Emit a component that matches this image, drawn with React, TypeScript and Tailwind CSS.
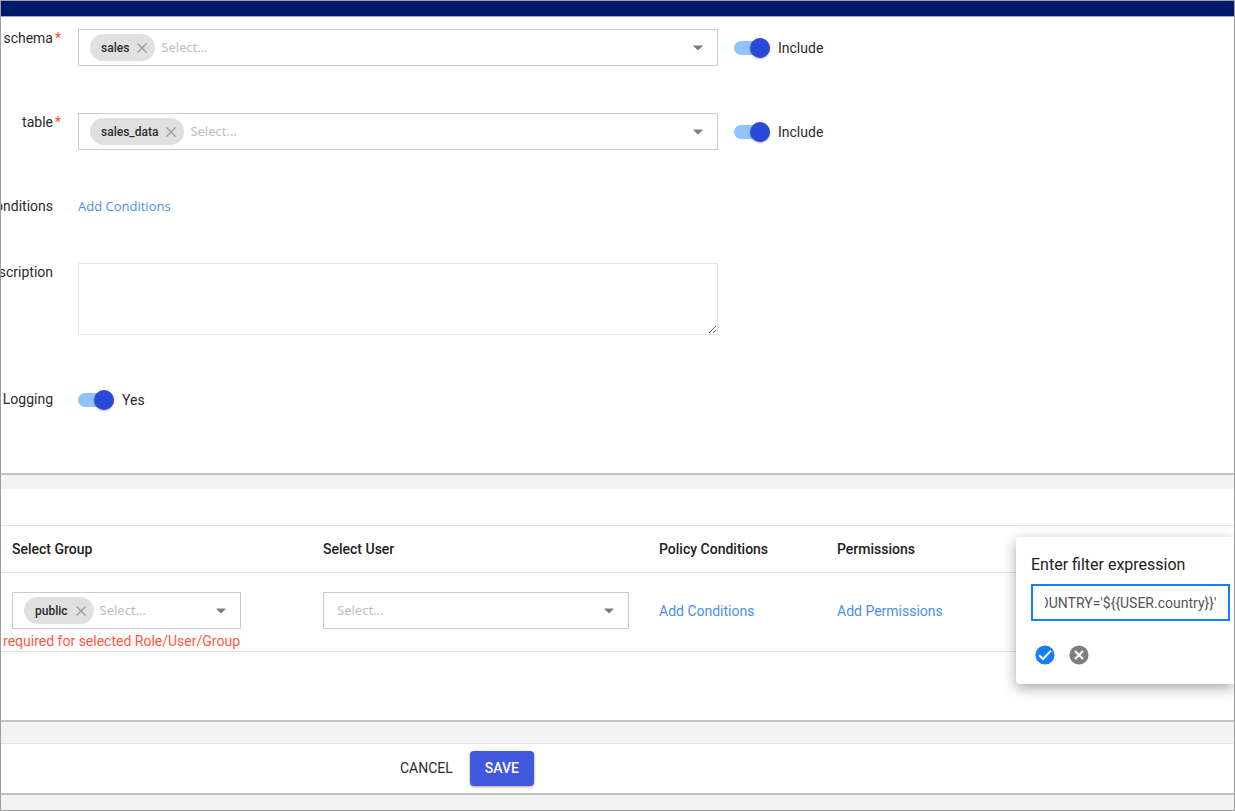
import { useId, useLayoutEffect, useRef, useState } from "react";
import type { ReactNode } from "react";

function CloseIcon() {
  return (
    <svg width="10" height="10" viewBox="0 0 10 10" fill="none" stroke="#9a9a9a" strokeWidth="1.3">
      <path d="M0.5 0.5l9 9M9.5 0.5L0.5 9.5" />
    </svg>
  );
}

function CaretIcon() {
  return (
    <svg width="10" height="6" viewBox="0 0 10 6" fill="#7d7d7d">
      <path d="M0.9 0.5h8.2c.5 0 .7.5.4.8L5.5 5.1a.7.7 0 0 1-1 0L.5 1.3C.2 1 .4.5.9.5z" />
    </svg>
  );
}

type TagSelectProps = { id?: string; label: string; tag?: string; className?: string };

function TagSelect({ id, label, tag, className = "" }: TagSelectProps) {
  return (
    <div
      className={`flex h-[37px] items-center border border-[#cccccc] bg-white pr-[14px] ${
        tag ? "gap-[6px] pl-[11px]" : "pl-[13px]"
      } ${className}`}
    >
      {tag && (
        <span className="flex h-[27px] shrink-0 items-center gap-2 rounded-full bg-[#e0e0e0] pr-2 pl-[11px] text-[12px] font-medium text-[#2b2b2b]">
          {tag}
          <button type="button" aria-label={`Remove ${tag}`}>
            <CloseIcon />
          </button>
        </span>
      )}
      <input
        id={id}
        type="text"
        aria-label={id ? undefined : label}
        placeholder="Select..."
        className="w-full min-w-0 flex-1 bg-transparent font-['Noto_Sans',sans-serif] text-[13px] outline-none placeholder:text-[#bdbdbd]"
      />
      <button type="button" aria-label={`Open ${label} options`}>
        <CaretIcon />
      </button>
    </div>
  );
}

function Toggle({ text }: { text: string }) {
  return (
    <label className="flex items-center gap-2 text-[14px] leading-[18px] text-[#2b2b2b]">
      <span className="relative flex h-5 w-9 items-center">
        <input type="checkbox" role="switch" defaultChecked className="peer sr-only" />
        <span className="h-[14px] w-full rounded-full bg-[#bdbdbd] peer-checked:bg-[#94c2fd]" />
        <span className="absolute left-0 size-5 rounded-full bg-white shadow-[0_1px_2px_rgba(0,0,0,0.3)] peer-checked:left-4 peer-checked:bg-[#2b49d9]" />
      </span>
      <span>{text}</span>
    </label>
  );
}

type RowProps = {
  label: string;
  htmlFor?: string;
  required?: boolean;
  children: ReactNode;
};

function FormRow({ label, htmlFor, required, children }: RowProps) {
  return (
    <div className="grid grid-cols-[61px_minmax(0,640px)_1fr] gap-x-4">
      <div className="flex h-[18px] justify-end text-[14px] leading-[18px] text-[#2b2b2b]">
        <label htmlFor={htmlFor} className="whitespace-nowrap">
          {label}
        </label>
        <span className="w-[9px] shrink-0 pl-0.5 text-[#ff4a1c]">{required ? "*" : ""}</span>
      </div>
      {children}
    </div>
  );
}

function FilterPopover() {
  const ref = useRef<HTMLInputElement>(null);
  const id = useId();
  const [value, setValue] = useState("COUNTRY='${{USER.country}}'");
  useLayoutEffect(() => {
    if (ref.current) ref.current.scrollLeft = ref.current.scrollWidth;
  }, []);
  return (
    <div className="absolute top-12 right-0 h-[147px] w-[218px] rounded-l-[4px] bg-white pt-[18px] pr-1 pl-[15px] shadow-[0_4px_14px_rgba(0,0,0,0.35)]">
      <label htmlFor={id} className="block text-[16px] leading-5 whitespace-nowrap text-[#212121]">
        Enter filter expression
      </label>
      <input
        id={id}
        ref={ref}
        value={value}
        onChange={(e) => setValue(e.target.value)}
        className="mt-[9px] h-[37px] w-full border-2 border-[#157efb] px-3 text-[14px] text-[#555555] outline-none"
      />
      <div className="mt-6 flex gap-[14px] pl-1">
        <button type="button" aria-label="Apply">
          <svg width="20" height="20" viewBox="0 0 20 20">
            <circle cx="10" cy="10" r="9.6" fill="#157efb" />
            <path d="M4.2 10.2l3.8 3.8 8-8.4" fill="none" stroke="#fff" strokeWidth="2" />
          </svg>
        </button>
        <button type="button" aria-label="Discard">
          <svg width="20" height="20" viewBox="0 0 20 20">
            <circle cx="10" cy="10" r="9.6" fill="#7f7f7f" />
            <path d="M6 6l8 8M14 6l-8 8" fill="none" stroke="#fff" strokeWidth="2.2" />
          </svg>
        </button>
      </div>
    </div>
  );
}

export default function App() {
  return (
    <div className="flex min-h-screen flex-col overflow-hidden border border-[#a0a0a0] bg-[#f3f3f3] font-[Roboto,sans-serif] text-[#2b2b2b]">
      <header className="h-4 border-b border-[#a3a8b8] bg-[#00186b]" />

      <section className="border-b-2 border-[#c4c4c4] bg-white pt-3 pb-[63px]">
        <div className="flex flex-col gap-[47px]">
          <FormRow label="schema" htmlFor="schema" required>
            <TagSelect id="schema" label="schema" tag="sales" />
            <Toggle text="Include" />
          </FormRow>
          <FormRow label="table" htmlFor="table" required>
            <TagSelect id="table" label="table" tag="sales_data" />
            <Toggle text="Include" />
          </FormRow>
          <FormRow label="Conditions">
            <a href="#conditions" className="font-['Open_Sans',sans-serif] text-[13px] leading-[19px] text-[#4a8fe7]">
              Add Conditions
            </a>
          </FormRow>
          <FormRow label="Description" htmlFor="description">
            <textarea id="description" className="block h-[72px] w-full resize-y border border-[#e6e6e6] outline-none" />
          </FormRow>
          <div className="pt-2">
            <FormRow label="Logging">
              <Toggle text="Yes" />
            </FormRow>
          </div>
        </div>
      </section>

      <section className="relative mt-[14px] border-b-2 border-[#c4c4c4] bg-white pt-9 pb-[68px]">
        <table className="w-full table-fixed border-collapse text-left text-[14px]">
          <thead>
            <tr className="h-[47px] border-y border-[#e3e3e3] text-[#212121]">
              <th className="w-[311px] px-[11px] font-medium">Select Group</th>
              <th className="w-[336px] px-[11px] font-medium">Select User</th>
              <th className="w-[178px] px-[11px] font-medium">Policy Conditions</th>
              <th className="px-[11px] font-medium">Permissions</th>
            </tr>
          </thead>
          <tbody>
            <tr className="border-b border-[#e3e3e3] align-top text-[#4a8fe7]">
              <td className="px-[11px] pt-[19px]">
                <TagSelect label="group" tag="public" className="w-[229px]" />
                <p className="flex h-[22px] w-[228px] justify-end pt-[3px] leading-[18px] whitespace-nowrap text-[#ff5a40]">
                  n required for selected Role/User/Group
                </p>
              </td>
              <td className="px-[11px] pt-[19px]">
                <TagSelect label="user" className="w-[306px]" />
              </td>
              <td className="px-[11px] pt-[19px] leading-[38px]">
                <a href="#policy-conditions">Add Conditions</a>
              </td>
              <td className="px-[11px] pt-[19px] leading-[38px]">
                <a href="#permissions">Add Permissions</a>
              </td>
            </tr>
          </tbody>
        </table>
        <FilterPopover />
      </section>

      <footer className="mt-[21px] flex h-[52px] items-center border-t border-b-2 border-t-[#e3e3e3] border-b-[#c0c0c0] bg-white pl-[399px] text-[14px]">
        <button type="button">CANCEL</button>
        <button
          type="button"
          className="ml-[17px] h-[35px] w-16 rounded-[4px] bg-[#4258dc] font-medium text-white shadow-[0_1px_3px_rgba(0,0,0,0.35)]"
        >
          SAVE
        </button>
      </footer>
    </div>
  );
}
